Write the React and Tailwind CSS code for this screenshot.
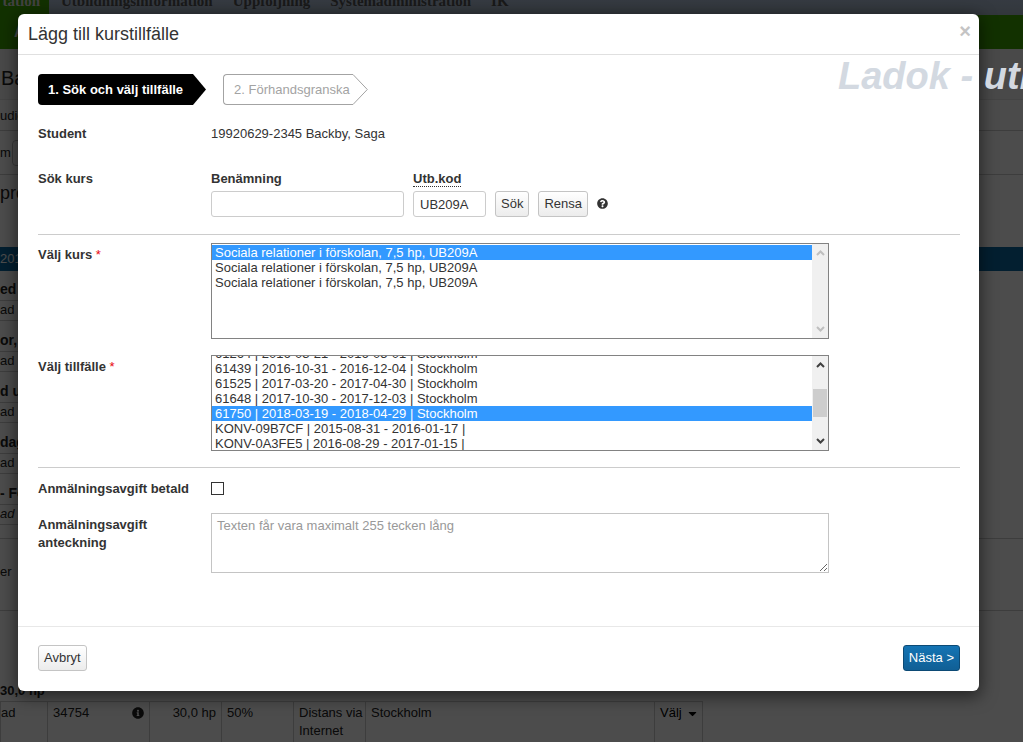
import React, { useEffect, useRef, useState } from "react";
import { FaCaretDown, FaInfoCircle, FaQuestionCircle } from "react-icons/fa";

const COURSES = [
  { id: "1", label: "Sociala relationer i förskolan, 7,5 hp, UB209A" },
  { id: "2", label: "Sociala relationer i förskolan, 7,5 hp, UB209A" },
  { id: "3", label: "Sociala relationer i förskolan, 7,5 hp, UB209A" },
];

const OCCASIONS = [
  { id: "61264", label: "61264 | 2016-03-21 - 2016-05-01 | Stockholm" },
  { id: "61439", label: "61439 | 2016-10-31 - 2016-12-04 | Stockholm" },
  { id: "61525", label: "61525 | 2017-03-20 - 2017-04-30 | Stockholm" },
  { id: "61648", label: "61648 | 2017-10-30 - 2017-12-03 | Stockholm" },
  { id: "61750", label: "61750 | 2018-03-19 - 2018-04-29 | Stockholm" },
  { id: "KONV-09B7CF", label: "KONV-09B7CF | 2015-08-31 - 2016-01-17 |" },
  { id: "KONV-0A3FE5", label: "KONV-0A3FE5 | 2016-08-29 - 2017-01-15 |" },
];

const PLAN_ROWS = [
  { title: "ed", row: "ad" },
  { title: "or, e", row: "ad" },
  { title: "d ut", row: "ad" },
  { title: "dag", row: "ad" },
  { title: "- Fö", row: "ad", italic: true },
];

const Chevron = ({ up }) => (
  <svg width="9" height="6" viewBox="0 0 9 6" fill="none" stroke="currentColor" strokeWidth="2">
    <path d={up ? "M1 5 L4.5 1.5 L8 5" : "M1 1 L4.5 4.5 L8 1"} />
  </svg>
);

const ListBox = ({ id, options, value, onChange, scrollTop = 0, active }) => {
  const ref = useRef(null);

  useEffect(() => {
    ref.current.scrollTop = scrollTop;
  }, [scrollTop]);

  return (
    <div className="flex h-24 border border-[#828282] bg-white">
      <select
        id={id}
        ref={ref}
        size={6}
        value={value}
        onChange={(e) => onChange(e.target.value)}
        className="h-full min-w-0 flex-1 appearance-none overflow-y-scroll py-px outline-none [scrollbar-width:none]"
      >
        {options.map((o) => (
          <option
            key={o.id}
            value={o.id}
            className="h-[15px] min-h-0 px-[3px] py-0 leading-[15px] checked:bg-[#3399ff] checked:bg-linear-to-r checked:from-[#3399ff] checked:to-[#3399ff] checked:text-white"
          >
            {o.label}
          </option>
        ))}
      </select>
      <div
        className={
          active
            ? "flex w-4 flex-col items-center justify-between bg-[#f0f0f0] py-1.5 text-[#404040]"
            : "flex w-4 flex-col items-center justify-between bg-[#f0f0f0] py-1.5 text-[#bfbfbf]"
        }
      >
        <Chevron up />
        {active && <div className="h-7 w-3.5 bg-[#cdcdcd]" />}
        <Chevron />
      </div>
    </div>
  );
};

const Button = ({ children, primary }) => (
  <button
    type="button"
    className={
      primary
        ? "h-[26px] rounded-[3px] border border-[#0c4a75] bg-linear-to-b from-[#1474b4] to-[#105f95] px-[5px] text-white"
        : "h-[26px] rounded-[3px] border border-[#c4c4c4] bg-linear-to-b from-white to-[#ececec] px-[5px]"
    }
  >
    {children}
  </button>
);

const Steps = () => (
  <ol className="flex gap-[17px]">
    <li className="flex h-[31px] font-bold text-white">
      <span className="flex items-center rounded-l bg-black pr-[9px] pl-2.5">
        1. Sök och välj tillfälle
      </span>
      <svg width="14" height="31" viewBox="0 0 14 31">
        <path d="M0 0 H1 L14 15.5 L1 31 H0 Z" fill="#000" />
      </svg>
    </li>
    <li className="flex h-[31px] text-[#a3a3a3]">
      <span className="flex items-center rounded-l border border-r-0 border-[#a3a3a3] pr-[3px] pl-2.5">
        2. Förhandsgranska
      </span>
      <svg width="15" height="31" viewBox="0 0 15 31" fill="none">
        <path d="M0 0.5 L14.3 15.5 L0 30.5" stroke="#a3a3a3" />
      </svg>
    </li>
  </ol>
);

const Row = ({ label, htmlFor, required, children }) => (
  <div className="flex">
    <div className={htmlFor ? "w-[173px] shrink-0 pt-[3px] font-bold" : "w-[173px] shrink-0 font-bold"}>
      {htmlFor ? <label htmlFor={htmlFor}>{label}</label> : label}
      {required && <span className="font-normal text-red-600"> *</span>}
    </div>
    <div className="max-w-[618px] min-w-0 flex-1">{children}</div>
  </div>
);

const Background = () => (
  <div className="flex flex-col text-[#222]" inert>
    <nav className="flex h-[15px] gap-5 bg-linear-to-b from-[#b4c4dc] to-[#a8b8c8] font-['Liberation_Serif',serif] text-[15px] leading-[18px] font-bold whitespace-nowrap text-[#555]">
      <span className="-mr-2 flex w-[49px] justify-end bg-[#3fa600] pr-[9px] text-[#ddd]">
        <span className="-mt-2">tation</span>
      </span>
      <span className="-mt-2">Utbildningsinformation</span>
      <span className="-mt-2">Uppföljning</span>
      <span className="-mt-2">Systemadministration</span>
      <span className="-mt-2">IK</span>
    </nav>
    <div className="h-[34px] bg-[#3fa600] pl-3.5 text-base leading-[34px] font-bold text-white">A</div>
    <div className="h-[51px] border-b border-[#e4e4e4] bg-[#f4f4f4] pl-px text-xl leading-[58px]">Ba</div>
    <div className="h-[31px] border-b border-[#ccc] bg-[#fafafa] text-[13px] leading-[31px]">udie</div>
    <div className="flex h-11 items-center border-b border-[#ccc]">
      <span className="w-3">m</span>
      <span className="h-[26px] w-16 rounded border border-[#bbb]" />
    </div>
    <div className="h-[72px] text-lg leading-9">pro</div>
    <div className="h-6 bg-[#0d6aa0] leading-6 text-white">2015</div>
    <div className="pt-2">
      {PLAN_ROWS.map((r) => (
        <div key={r.title} className="h-[51px]">
          <div className="h-[21px] w-10 text-sm leading-[21px] font-bold">{r.title}</div>
          <div
            className={
              r.italic ? "h-[21px] w-[702px] border-y border-[#ccc] italic" : "h-[21px] w-[702px] border-y border-[#ccc]"
            }
          >
            {r.row}
          </div>
        </div>
      ))}
    </div>
    <div className="mt-1 h-[73px] border-y border-[#ccc] leading-[66px]">er</div>
    <div className="flex h-[90px] items-end text-[13px] leading-5 font-bold">30,0 hp</div>
    <table className="w-[703px] table-fixed border-collapse text-left leading-[18px]">
      <tbody>
        <tr className="h-[42px] *:border *:border-[#ccc] *:px-[5px] *:pt-0.5 *:align-top">
          <td className="w-[47px] border-l-0 pl-0!">ad</td>
          <td className="w-[102px]">
            <span className="flex items-center justify-between">
              34754 <FaInfoCircle className="size-3" />
            </span>
          </td>
          <td className="w-[72px] text-right">30,0 hp</td>
          <td className="w-[72px]">50%</td>
          <td className="w-[72px] pr-0!">Distans via Internet</td>
          <td>Stockholm</td>
          <td className="w-[48px]">
            <button type="button" className="flex items-center gap-1 text-black">
              Välj <FaCaretDown />
            </button>
          </td>
        </tr>
      </tbody>
    </table>
  </div>
);

const Modal = () => {
  const [name, setName] = useState("");
  const [code, setCode] = useState("UB209A");
  const [course, setCourse] = useState("1");
  const [occasion, setOccasion] = useState("61750");
  const [paid, setPaid] = useState(false);
  const [note, setNote] = useState("");

  return (
    <div
      role="dialog"
      aria-labelledby="modal-title"
      className="rounded-md bg-white shadow-[0_4px_16px_2px_rgba(0,0,0,0.5)]"
    >
      <div className="flex h-[41px] items-center justify-between border-b border-[#e0e0e0] pr-2 pl-2.5">
        <h3 id="modal-title" className="text-lg">
          Lägg till kurstillfälle
        </h3>
        <button type="button" className="mb-1.5 text-xl leading-5 font-bold text-[#c4c4c4]">
          ×
        </button>
      </div>

      <form className="pt-[19px] pr-[19px] pb-[53px] pl-5">
        <Steps />
        <div className="mt-5">
          <Row label="Student">19920629-2345 Backby, Saga</Row>
        </div>
        <div className="mt-[27px] mb-[17px]">
          <Row label="Sök kurs">
            <div className="flex items-end gap-[9px]">
              <div className="flex w-[193px] flex-col gap-[3px]">
                <label htmlFor="name" className="font-bold">
                  Benämning
                </label>
                <input
                  id="name"
                  value={name}
                  onChange={(e) => setName(e.target.value)}
                  className="h-[26px] rounded-[3px] border border-[#ccc] px-1.5"
                />
              </div>
              <div className="flex w-[73px] flex-col gap-[3px]">
                <label htmlFor="code" className="font-bold">
                  <abbr className="border-b border-dotted border-[#333] no-underline">Utb.kod</abbr>
                </label>
                <input
                  id="code"
                  value={code}
                  onChange={(e) => setCode(e.target.value)}
                  className="h-[26px] rounded-[3px] border border-[#ccc] px-1.5"
                />
              </div>
              <Button>Sök</Button>
              <Button>Rensa</Button>
              <FaQuestionCircle className="mb-2 size-[11px]" />
            </div>
          </Row>
        </div>

        <div className="flex flex-col gap-4 border-y border-[#ccc] pt-2 pb-4">
          <Row label="Välj kurs" htmlFor="course" required>
            <ListBox id="course" options={COURSES} value={course} onChange={setCourse} />
          </Row>
          <Row label="Välj tillfälle" htmlFor="occasion" required>
            <ListBox
              id="occasion"
              options={OCCASIONS}
              value={occasion}
              onChange={setOccasion}
              scrollTop={11}
              active
            />
          </Row>
        </div>

        <div className="mt-[9px] flex flex-col gap-[15px]">
          <Row label="Anmälningsavgift betald" htmlFor="paid">
            <input
              id="paid"
              type="checkbox"
              checked={paid}
              onChange={(e) => setPaid(e.target.checked)}
              className="mt-[5px] block size-[13px] appearance-none border border-[#333] bg-white checked:bg-[#333]"
            />
          </Row>
          <Row label="Anmälningsavgift anteckning" htmlFor="note">
            <textarea
              id="note"
              value={note}
              maxLength={255}
              onChange={(e) => setNote(e.target.value)}
              placeholder="Texten får vara maximalt 255 tecken lång"
              className="block h-[60px] w-full border border-[#c4c4c4] px-[5px] py-[3px] placeholder:text-[#999]"
            />
          </Row>
        </div>
      </form>

      <div className="flex items-center justify-between border-t border-[#e8e8e8] pt-[18px] pr-[19px] pb-5 pl-5">
        <Button>Avbryt</Button>
        <Button primary>Nästa &gt;</Button>
      </div>
    </div>
  );
};

const App = () => {
  return (
    <div className="relative min-h-screen overflow-hidden bg-white font-['Liberation_Sans',Arial,sans-serif] text-[13px] leading-[18px] text-[#333]">
      <Background />
      <div className="absolute inset-0 bg-black/70" />
      <div className="absolute inset-x-0 top-0 pt-3.5 pr-11 pl-[18px]">
        <Modal />
      </div>
      {/* environment banner, runs off the right edge */}
      <div className="pointer-events-none absolute top-14 left-[838px] text-[38px] leading-10 font-bold whitespace-nowrap text-[#d3d9e1] italic">
        Ladok - utb
      </div>
    </div>
  );
};

export default App;
